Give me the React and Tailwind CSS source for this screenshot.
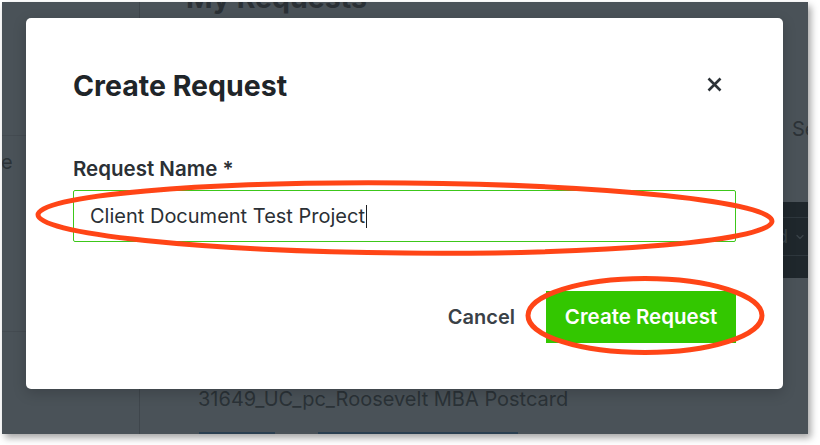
import { ChevronDown } from 'lucide-react';

function CloseIcon() {
  return (
    <svg width="15" height="15" viewBox="0 0 15 15" fill="none">
      <path d="M1.5 1.5L13.5 13.5M13.5 1.5L1.5 13.5" stroke="#2d3338" strokeWidth="2.6" />
    </svg>
  );
}

function Sidebar() {
  return (
    <div className="flex w-[138px] shrink-0 flex-col border-r border-[#3f464c]">
      <div className="h-[134px] border-b border-[#444b51]" />
      <div className="h-[196px] border-b border-[#444b51] pt-[12px]">
        <span className="-ml-[1px] text-[20px] leading-[28px] text-[#2b3237]">e</span>
      </div>
    </div>
  );
}

function MainBehind() {
  return (
    <div className="flex min-w-0 flex-1 flex-col pl-[46px]">
      <h1 className="-mt-[20px] h-[32px] whitespace-nowrap text-[28.5px] font-bold leading-[32px] text-[#2a3035]">
        My Requests
      </h1>
      <div className="mt-[101px] h-[28px] whitespace-nowrap pl-[606px] text-[20px] leading-[28px] text-[#2c3237]">
        Search
      </div>
      <div className="mt-[59px] flex h-[76px] flex-col bg-[#1f272c]">
        <div className="h-[16px] border-b border-[#2e373d]" />
        <div className="flex h-[38px] items-center justify-end border-b border-[#2e373d] pr-[2px] text-[18px] text-[#3a4349]">
          <span className="whitespace-nowrap">Sorted</span>
          <ChevronDown size={12} strokeWidth={2.5} className="ml-[6px]" />
        </div>
      </div>
      <div className="mt-[107px] h-[28px] whitespace-nowrap pl-[12px] text-[20px] leading-[28px] text-[#2b3237]">
        31649_UC_pc_Roosevelt MBA Postcard
      </div>
      <div className="mt-[19px] flex">
        <div className="ml-[13px] h-[2px] w-[76px] bg-[#2a3f50]" />
        <div className="ml-[43px] h-[2px] w-[200px] bg-[#2a3f50]" />
      </div>
    </div>
  );
}

function CreateRequestModal() {
  return (
    <div className="absolute left-[24px] top-[16px] flex w-[757px] flex-col rounded-[5px] bg-white px-[47px] pb-[46px] pt-[52px] shadow-[0_4px_14px_rgba(0,0,0,0.18)]">
      <div className="flex h-[32px] items-center justify-between">
        <h2 className="whitespace-nowrap text-[28.5px] font-bold leading-[32px] text-[#1f2529]">
          Create Request
        </h2>
        <button className="-mt-[3px] mr-[14px]">
          <CloseIcon />
        </button>
      </div>
      <label className="mt-[55px] text-[20.5px] font-semibold leading-[24px] text-[#2b3035]">
        Request Name *
      </label>
      <div className="mt-[9px] flex h-[52px] items-center rounded-[2px] border border-[#3cc71a] pl-[16px] text-[20px] text-[#2b3035]">
        <span>Client Document Test Project</span>
        <span className="ml-[1px] h-[23px] w-px bg-[#1c1f22]" />
      </div>
      <div className="mt-[49px] flex items-center justify-end">
        <button className="mr-[31px] text-[20px] font-semibold text-[#3a4147]">Cancel</button>
        <button className="h-[52px] w-[190px] bg-[#33c700] text-[20.5px] font-semibold text-white">
          Create Request
        </button>
      </div>
    </div>
  );
}

function Annotations() {
  return (
    <svg className="pointer-events-none absolute left-0 top-0" width="806" height="432">
      <defs>
        <filter id="soft">
          <feGaussianBlur stdDeviation="0.6" />
        </filter>
      </defs>
      <g fill="none" stroke="#ff4419" strokeWidth="5" filter="url(#soft)">
        <ellipse cx="403" cy="216" rx="367" ry="35" transform="rotate(0.5 403 216)" />
        <ellipse cx="643" cy="313.5" rx="117" ry="37" />
      </g>
    </svg>
  );
}

export default function App() {
  return (
    <div className="h-[445px] w-[820px] bg-white pl-[2px] pt-[2px] font-['Inter','Liberation_Sans',sans-serif]">
      <div className="relative flex h-[432px] w-[806px] overflow-hidden bg-[#4a5258] shadow-[3px_4px_7px_rgba(0,0,0,0.35)]">
        <Sidebar />
        <MainBehind />
        <CreateRequestModal />
        <Annotations />
      </div>
    </div>
  );
}
